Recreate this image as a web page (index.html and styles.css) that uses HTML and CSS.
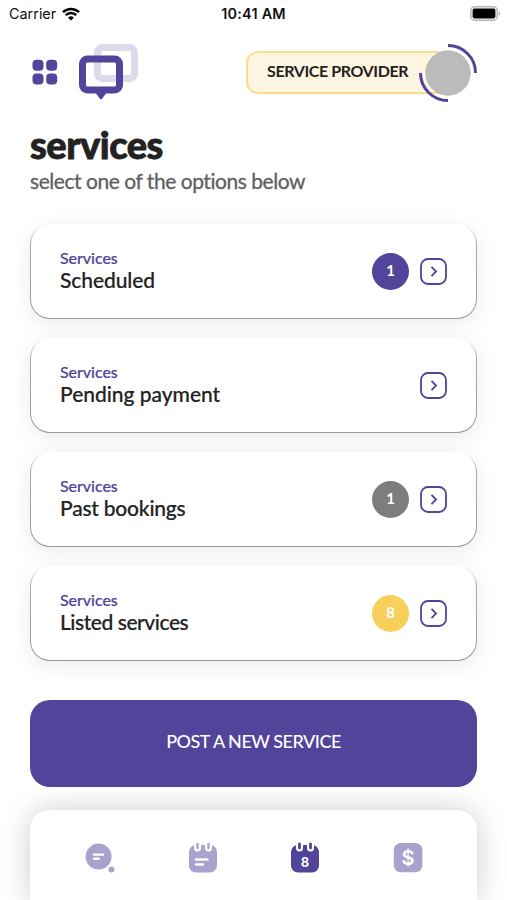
FILE: index.html
```html
<!DOCTYPE html>
<html lang="en">
<head>
  <meta charset="UTF-8" />
  <meta name="viewport" content="width=device-width, initial-scale=1" />
  <title>Services</title>
  <link rel="stylesheet" href="styles.css">
</head>
<body>
  <div class="screen">
    <div class="status-bar">
      <div class="carrier">
        <span>Carrier</span>
        <svg width="18" height="14" viewBox="0 0 18 14" fill="none" stroke="#000" stroke-width="2.5">
          <path d="M1 5.2a11.4 11.4 0 0 1 16 0" />
          <path d="M3.8 8.2a7.3 7.3 0 0 1 10.4 0" />
          <path d="M9 13.6L6.1 10.7a4.1 4.1 0 0 1 5.8 0z" fill="#000" stroke="none" />
        </svg>
      </div>
      <div class="time">10:41 AM</div>
      <div class="battery">
        <svg width="31" height="15" viewBox="0 0 31 15">
          <rect x="0.8" y="0.8" width="26.4" height="13.4" rx="3.8" fill="#fff" stroke="#b5b5b5" stroke-width="1.5" />
          <rect x="2.6" y="2.6" width="22.8" height="9.8" rx="1.8" fill="#000" />
          <path d="M28.7 5.2q3 2.3 0 4.6z" fill="#aaa" />
        </svg>
      </div>
    </div>

    <header class="header">
      <svg class="menu" width="26" height="26" viewBox="0 0 26 26" fill="#51449a">
        <rect x="0.5" y="0.8" width="11" height="11" rx="4" />
        <rect x="14.2" y="0.8" width="11" height="11" rx="4" />
        <rect x="0.5" y="14.6" width="11" height="11" rx="4" />
        <rect x="14.2" y="14.6" width="11" height="11" rx="4" />
      </svg>
      <svg class="logo" width="60" height="58" viewBox="0 0 60 58" fill="none" stroke="#51449a" stroke-width="7">
        <rect x="18.5" y="4.5" width="37" height="31" rx="5" opacity="0.2" />
        <rect x="3.5" y="16" width="37" height="31" rx="5" />
        <path d="M16 49h12l-4.7 6.6q-1.3 1.5-2.6 0z" fill="#51449a" stroke="none" />
      </svg>
      <div class="role">
        <span>SERVICE PROVIDER</span>
        <svg class="avatar" width="60" height="60" viewBox="0 0 60 60">
          <circle cx="30" cy="30" r="22.7" fill="#bbb" />
          <path d="M30 2.5A27.5 27.5 0 0 1 57.5 30M30 57.5A27.5 27.5 0 0 1 2.5 30" fill="none" stroke="#51449a" stroke-width="3" />
        </svg>
      </div>
    </header>

    <div class="heading">
      <h1>services</h1>
      <p>select one of the options below</p>
    </div>

    <main class="cards">
      <a class="card">
        <div class="card-text">
          <span class="label">Services</span>
          <span class="title scheduled">Scheduled</span>
        </div>
        <span class="badge purple">1</span>
        <svg class="arrow" width="27" height="27" viewBox="0 0 27 27"><rect x="1" y="1" width="25" height="25" rx="7" /><path d="M11.5 8.8l4.6 4.7-4.6 4.7" /></svg>
      </a>
      <a class="card">
        <div class="card-text">
          <span class="label">Services</span>
          <span class="title pending">Pending payment</span>
        </div>
        <svg class="arrow" width="27" height="27" viewBox="0 0 27 27"><rect x="1" y="1" width="25" height="25" rx="7" /><path d="M11.5 8.8l4.6 4.7-4.6 4.7" /></svg>
      </a>
      <a class="card">
        <div class="card-text">
          <span class="label">Services</span>
          <span class="title past">Past bookings</span>
        </div>
        <span class="badge gray">1</span>
        <svg class="arrow" width="27" height="27" viewBox="0 0 27 27"><rect x="1" y="1" width="25" height="25" rx="7" /><path d="M11.5 8.8l4.6 4.7-4.6 4.7" /></svg>
      </a>
      <a class="card">
        <div class="card-text">
          <span class="label">Services</span>
          <span class="title listed">Listed services</span>
        </div>
        <span class="badge yellow">8</span>
        <svg class="arrow" width="27" height="27" viewBox="0 0 27 27"><rect x="1" y="1" width="25" height="25" rx="7" /><path d="M11.5 8.8l4.6 4.7-4.6 4.7" /></svg>
      </a>
    </main>

    <button class="post">POST A NEW SERVICE</button>

    <nav class="tabs">
      <svg width="30" height="32" viewBox="0 0 30 32">
        <circle cx="13.6" cy="14.6" r="13" fill="#a9a2ce" />
        <circle cx="26.4" cy="27.4" r="3" fill="#a9a2ce" />
        <path d="M9 12.6h9M9 16.8h4.6" stroke="#fff" stroke-width="2.4" stroke-linecap="round" />
      </svg>
      <svg width="30" height="32" viewBox="0 0 30 32">
        <rect x="1" y="3" width="28" height="27.5" rx="7" fill="#a9a2ce" />
        <path d="M9.5 0v6M20.5 0v6" stroke="#fff" stroke-width="7" stroke-linecap="round" />
        <path d="M9.5 2v4M20.5 2v4" stroke="#a9a2ce" stroke-width="2.4" stroke-linecap="round" />
        <path d="M8 17.4h11.5M8 22.6h7" stroke="#fff" stroke-width="2.5" stroke-linecap="round" />
      </svg>
      <svg width="30" height="32" viewBox="0 0 30 32">
        <rect x="1" y="3" width="28" height="27.5" rx="7" fill="#51449a" />
        <path d="M9.5 0v6M20.5 0v6" stroke="#fff" stroke-width="7" stroke-linecap="round" />
        <path d="M9.5 2v4M20.5 2v4" stroke="#51449a" stroke-width="2.8" stroke-linecap="round" />
        <text class="day" x="15" y="24.8" text-anchor="middle">8</text>
      </svg>
      <svg width="30" height="32" viewBox="0 0 30 32">
        <rect x="0.8" y="1" width="28.6" height="29.2" rx="7" fill="#a9a2ce" />
        <text class="dollar" x="15" y="22.8" text-anchor="middle">$</text>
      </svg>
    </nav>
  </div>
</body>
</html>
```
FILE: styles.css
```css
:root {
  --purple: #51449a;
  --yellow: #f8cf5a;
  --gray: #7d7d7d;
  --text: #222;
}

* {
  box-sizing: border-box;
}

body {
  margin: 0;
  background-color: #fff;
  color: var(--text);
  font-family: Lato, "Open Sans", sans-serif;
}

.screen {
  display: flex;
  flex-direction: column;
  height: 900px;
  overflow: hidden;
}

svg {
  display: block;
  flex: none;
}

.status-bar {
  display: grid;
  grid-template-columns: 1fr auto 1fr;
  align-items: center;
  height: 27px;
  padding: 0 6px 0 9px;
  font-family: Inter, sans-serif;
  font-size: 14.4px;
  color: #111;
}

.carrier {
  display: flex;
  align-items: center;
  gap: 6px;
}

.time {
  padding-right: 3px;
  font-weight: 600;
  letter-spacing: 0.25px;
}

.battery {
  justify-self: end;
}

.header {
  display: flex;
  align-items: center;
  height: 90px;
  padding: 0 30px 0 32px;
}

.logo {
  margin-left: 21px;
}

.role {
  display: flex;
  align-items: center;
  position: relative;
  width: 202px;
  height: 43px;
  margin-left: auto;
  margin-right: 29px;
  padding: 0 0 4px 19px;
  border: 2px solid #f9dd8c;
  border-radius: 12px;
  background-color: #fef6e0;
  font-size: 16px;
  font-weight: 700;
  letter-spacing: -0.4px;
  white-space: nowrap;
}

/* avatar hangs over the right end of the pill */
.avatar {
  position: absolute;
  right: -32px;
  top: -10px;
}

.heading {
  height: 107px;
  padding: 7px 30px 0;
}

h1 {
  margin: 0;
  font-size: 38px;
  line-height: 40px;
  font-weight: 900;
  letter-spacing: -0.5px;
  -webkit-text-stroke: 0.8px var(--text);
}

.heading p {
  margin: 4px 0 0;
  font-size: 21px;
  line-height: 26px;
  letter-spacing: -0.46px;
  color: #606060;
  -webkit-text-stroke: 0.3px #606060;
}

.cards {
  display: flex;
  flex-direction: column;
  gap: 19px;
  padding: 0 30px;
}

/* outline fades out towards the top edge */
.card {
  display: flex;
  align-items: center;
  height: 95px;
  padding: 0 29px;
  border: 1px solid transparent;
  border-radius: 20px;
  background: linear-gradient(#fff, #fff) padding-box, linear-gradient(#fff 1px, #aaa 20px, #999) border-box;
  box-shadow: 0 5px 22px rgba(0, 0, 0, 0.08);
}

.card-text {
  display: flex;
  flex-direction: column;
  flex: 1;
  padding-bottom: 3px;
}

.label {
  font-size: 16px;
  line-height: 20px;
  font-weight: 500;
  letter-spacing: -0.05px;
  color: var(--purple);
  -webkit-text-stroke: 0.2px var(--purple);
}

.title {
  font-size: 21px;
  line-height: 24px;
  font-weight: 500;
  -webkit-text-stroke: 0.2px var(--text);
}

.title.scheduled {
  letter-spacing: -0.08px;
}

.title.pending {
  letter-spacing: -0.03px;
}

.title.past {
  letter-spacing: -0.22px;
}

.title.listed {
  letter-spacing: -0.44px;
}

.badge {
  width: 37px;
  height: 37px;
  border-radius: 50%;
  color: #fff;
  font-size: 15px;
  line-height: 35px;
  font-weight: 700;
  text-align: center;
}

.badge.purple {
  background-color: var(--purple);
}

.badge.gray {
  background-color: var(--gray);
}

.badge.yellow {
  background-color: var(--yellow);
}

.arrow {
  margin-left: 11px;
  fill: none;
  stroke: var(--purple);
  stroke-width: 1.8;
}

.post {
  position: relative;
  z-index: 1;
  flex: none;
  height: 87px;
  margin: 39px 30px 0;
  padding: 0 0 5px;
  border: none;
  border-radius: 20px;
  background-color: var(--purple);
  color: #fff;
  font-family: inherit;
  font-size: 18px;
  font-weight: 500;
  letter-spacing: -0.5px;
}

.tabs {
  display: flex;
  justify-content: space-between;
  flex: 1;
  margin: 23px 30px 0;
  padding: 32px 54px 0 55px;
  border-radius: 20px 20px 0 0;
  background-color: #fff;
  box-shadow: 0 0 30px rgba(0, 0, 0, 0.2);
}

.day {
  fill: #fff;
  font-family: Inter, sans-serif;
  font-size: 13px;
  font-weight: 700;
}

.dollar {
  fill: #fff;
  font-family: Inter, sans-serif;
  font-size: 20px;
  font-weight: 600;
}
```
